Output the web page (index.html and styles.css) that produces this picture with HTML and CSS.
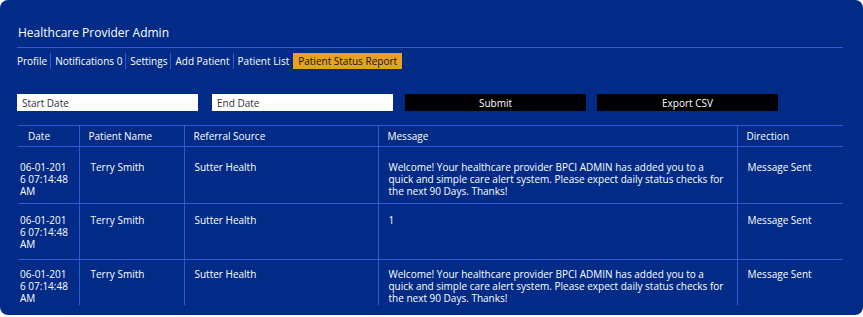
FILE: index.html
```html
<!DOCTYPE html>
<html lang="en">
<head>
    <meta charset="UTF-8">
    <title>Patient Status Report</title>
    <link rel="stylesheet" href="styles.css">
</head>
<body>
    <div class="panel">
        <div class="title-bar">Healthcare Provider Admin</div>

        <div class="nav">
            <a href="#">Profile</a>
            <a href="#">Notifications 0</a>
            <a href="#">Settings</a>
            <a href="#">Add Patient</a>
            <a href="#">Patient List</a>
            <a href="#" class="active">Patient Status Report</a>
        </div>

        <div class="filters">
            <input type="text" class="date-input" placeholder="Start Date">
            <input type="text" class="date-input end" placeholder="End Date">
            <button class="btn submit">Submit</button>
            <button class="btn">Export CSV</button>
        </div>

        <table class="report">
            <colgroup>
                <col style="width: 61px">
                <col style="width: 105px">
                <col style="width: 194px">
                <col style="width: 359px">
                <col>
            </colgroup>
            <thead>
                <tr>
                    <th>Date</th>
                    <th>Patient Name</th>
                    <th>Referral Source</th>
                    <th>Message</th>
                    <th>Direction</th>
                </tr>
            </thead>
            <tbody>
                <tr>
                    <td class="date">06-01-2016 07:14:48 AM</td>
                    <td class="name">Terry Smith</td>
                    <td>Sutter Health</td>
                    <td>Welcome! Your healthcare provider BPCI ADMIN has added you to a quick and simple care alert system. Please expect daily status checks for the next 90 Days. Thanks!</td>
                    <td>Message Sent</td>
                </tr>
                <tr>
                    <td class="date">06-01-2016 07:14:48 AM</td>
                    <td class="name">Terry Smith</td>
                    <td>Sutter Health</td>
                    <td>1</td>
                    <td>Message Sent</td>
                </tr>
                <tr>
                    <td class="date">06-01-2016 07:14:48 AM</td>
                    <td class="name">Terry Smith</td>
                    <td>Sutter Health</td>
                    <td>Welcome! Your healthcare provider BPCI ADMIN has added you to a quick and simple care alert system. Please expect daily status checks for the next 90 Days. Thanks!</td>
                    <td>Message Sent</td>
                </tr>
            </tbody>
        </table>
    </div>
</body>
</html>
```

FILE: styles.css
```css
body {
    margin: 0;
    padding: 0;
    background-color: #ffffff;
    font-family: "Open Sans", Arial, sans-serif;
    color: #ffffff;
}

.panel {
    background-color: #012b87;
    border-radius: 8px;
    height: 315px;
    box-sizing: border-box;
    padding: 25px 20px 12px 17px;
}

.title-bar {
    font-size: 12px;
    line-height: 16px;
    padding: 0 0 6px 1px;
    border-bottom: 1px solid #2d5bd6;
}

.nav {
    display: flex;
    align-items: center;
    margin-top: 5px;
}

.nav a {
    color: #ffffff;
    text-decoration: none;
    font-size: 10px;
    line-height: 16px;
    padding: 0 3px 0 4px;
    border-left: 1px solid #2d5bd6;
}

.nav a:first-child {
    padding-left: 0;
    border-left: none;
}

.nav a.active {
    background-color: #e8a21e;
    color: #111;
    border-left: none;
    margin-left: 1px;
    padding: 0 5px;
}

.filters {
    display: flex;
    margin-top: 25px;
}

.date-input {
    width: 181px;
    height: 17px;
    box-sizing: border-box;
    border: none;
    margin: 0 14px 0 0;
    padding: 0 5px;
    font-family: inherit;
    font-size: 10px;
    color: #333;
    background: #fff;
    outline: none;
}

.date-input::placeholder {
    color: #333;
}

.date-input.end {
    margin-right: 12px;
}

.btn {
    width: 181px;
    height: 17px;
    border: none;
    padding: 0;
    background-color: #000;
    color: #fff;
    font-family: inherit;
    font-size: 10px;
    cursor: pointer;
}

.btn.submit {
    margin-right: 11px;
}

.report {
    width: 825px;
    margin: 14px 0 0 1px;
    border-collapse: collapse;
    table-layout: fixed;
    font-size: 10px;
    line-height: 12px;
}

.report th,
.report td {
    text-align: left;
    vertical-align: top;
    font-weight: normal;
    border-left: 1px solid #2d5bd6;
    border-top: 1px solid #2d5bd6;
}

.report th:first-child,
.report td:first-child {
    border-left: none;
}

.report th {
    padding: 4px 8px 4px 9px;
}

.report th:first-child {
    padding-left: 10px;
}

.report td {
    padding: 14px 10px 6px 10px;
}

.report tbody tr:nth-child(2) td {
    padding-top: 10px;
    padding-bottom: 9px;
}

.report tbody tr:nth-child(3) td {
    padding-top: 8px;
    padding-bottom: 1px;
}

.report td.date {
    padding-left: 2px;
    padding-right: 8px;
    word-break: break-all;
}

.report td.name {
    padding-left: 11px;
}
```
